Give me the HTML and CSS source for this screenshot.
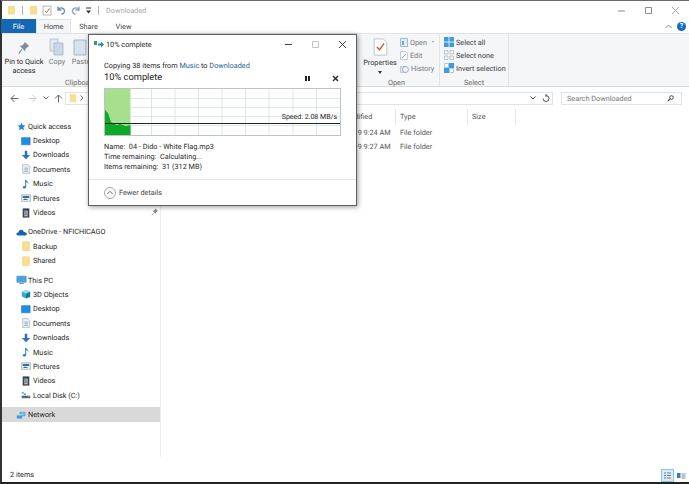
FILE: index.html
```html
<!DOCTYPE html>
<html lang="en">
<head>
<meta charset="utf-8">
<title>Downloaded</title>
<link rel="stylesheet" href="styles.css">
</head>
<body>
<svg class="defs" width="0" height="0">
  <symbol id="folder" viewBox="0 0 12 12"><path d="M2 1h8v10.500H2z" fill="#fbdf8e" stroke="#e8c66a" stroke-width=".6"/></symbol>
  <symbol id="desktop" viewBox="0 0 12 12"><path d="M.5 2h10.500v8.500H.5z" fill="#1c8fe8" stroke="#1668b8" stroke-width=".6"/></symbol>
  <symbol id="down" viewBox="0 0 12 12"><path d="M4.500 1h3v5H11L6 11 1 6h3.500z" fill="#2b72c4"/></symbol>
  <symbol id="docs" viewBox="0 0 12 12"><path d="M2 .5h6l2.500 2.500v8.500H2z" fill="#e6eef2" stroke="#96a8b2" stroke-width=".7"/><path d="M4 5h4.500M4 7h4.500M4 9h4.500" stroke="#6f9fb8" stroke-width=".8"/></symbol>
  <symbol id="music" viewBox="0 0 12 12"><path d="M5 1h1.200c.3 2 3.300 2.500 3 5-.4-1.200-1.400-2-3-2.200V9.500C6.200 11 4.800 11.500 3.800 11.500S2 10.800 2.200 9.800C2.500 8.700 4 8.300 5 8.700z" fill="#2a7fd0"/></symbol>
  <symbol id="pictures" viewBox="0 0 12 12"><path d="M.5 2h11v8H.5z" fill="#e9eff3" stroke="#8b9aa5" stroke-width=".7"/><path d="M2 3.500h8v2.500H2z" fill="#2f6fa8"/><path d="M2 8.500l3-2 4 2z" fill="#56606a"/></symbol>
  <symbol id="videos" viewBox="0 0 12 12"><path d="M2 .5h8v11H2z" fill="#3a4150"/><path d="M3.500 3h5v5h-5z" fill="#7f97b8"/><path d="M4 8h4v2H4z" fill="#d9c06b"/></symbol>
  <symbol id="pc" viewBox="0 0 14 12"><path d="M1 1h12v8H1z" fill="#43a3e8" stroke="#7e96a8" stroke-width=".8"/><path d="M4 10.500h6" stroke="#7e96a8" stroke-width="1.300"/></symbol>
  <symbol id="cube" viewBox="0 0 12 12"><path d="M6 .5l5 2.500-5 2.500L1 3z" fill="#8fe0ef"/><path d="M1 3l5 2.500v6L1 9z" fill="#39a9c9"/><path d="M11 3L6 5.500v6l5-2z" fill="#1779a8"/></symbol>
  <symbol id="disk" viewBox="0 0 14 12"><path d="M1 7h12v3.500H1z" fill="#56626c"/><path d="M1 2h3v2H1zM4 4h3v2H4z" fill="#2f9fe0"/><path d="M10 8.500h2" stroke="#8be08b"/></symbol>
  <symbol id="net" viewBox="0 0 14 12"><path d="M1 6.500h7v4H1z" fill="#3f9be0"/><path d="M5 5V2.500h6.500V7H8" fill="#7cc3ef" stroke="#4d8fc2" stroke-width=".8"/></symbol>
  <symbol id="cloud" viewBox="0 0 14 10"><path d="M3 9.500C1 9.500.3 8.200.6 7 1 5.800 2 5.500 3 5.500 3.500 3 5.800 1.500 8 2.500c1 .4 1.700 1.300 2 2.500 2-.2 3.700 1 3.700 2.500s-1 2-2.200 2z" fill="#1266b3"/></symbol>
  <symbol id="star" viewBox="0 0 12 12"><path d="M6 .5l1.600 3.700 3.900.3-3 2.600.9 3.900L6 9l-3.400 2 .9-3.900-3-2.600 3.900-.3z" fill="#2b7fd0"/></symbol>
</svg>

<div class="window">
  <header class="titlebar">
    <svg class="tb-ic" width="9" height="10"><use href="#folder"/></svg>
    <span class="tb-sep"></span>
    <svg class="tb-ic" width="9" height="10"><use href="#folder"/></svg>
    <svg class="tb-ic" width="10" height="11" viewBox="0 0 10 11"><path d="M1 1h8v9H1z" fill="#fff" stroke="#9aa4ad" stroke-width=".8"/><path d="M3 6l1.500 1.500L7.500 3.500" fill="none" stroke="#c8642a"/></svg>
    <svg class="tb-ic" width="10" height="10" viewBox="0 0 10 10"><path d="M2 1.500V5h3.500M2.300 4.500C4 2 8 2.500 8.500 5.500 8.800 7.500 7 9 5.500 9.300" fill="none" stroke="#6f8fa8" stroke-width="1.400"/></svg>
    <svg class="tb-ic tb-gap" width="10" height="10" viewBox="0 0 10 10"><path d="M8 1.500V5H4.500M7.700 4.500C6 2 2 2.500 1.500 5.500 1.200 7.500 3 9 4.500 9.300" fill="none" stroke="#8fa3b2" stroke-width="1.400"/></svg>
    <svg class="tb-ic" width="7" height="7" viewBox="0 0 7 7"><path d="M1 1h5" stroke="#333"/><path d="M1 3.500h5L3.500 6.500z" fill="#333"/></svg>
    <span class="tb-sep"></span>
    <span class="tb-title">Downloaded</span>
    <div class="win-btns">
      <svg width="9" height="9" viewBox="0 0 9 9"><path d="M1 5h7" stroke="#8a8a8a"/></svg>
      <svg width="9" height="9" viewBox="0 0 9 9"><path d="M1.500 1.500h6v6h-6z" fill="none" stroke="#8a8a8a"/></svg>
      <svg width="9" height="9" viewBox="0 0 9 9"><path d="M1 1l7 7M8 1L1 8" stroke="#8a8a8a" stroke-width=".8"/></svg>
    </div>
  </header>

  <nav class="tabs">
    <span class="tab tab-file">File</span>
    <span class="tab tab-active">Home</span>
    <span class="tab">Share</span>
    <span class="tab">View</span>
    <span class="tabs-right">
      <svg width="7" height="5" viewBox="0 0 7 5"><path d="M.5 4l3-3 3 3" fill="none" stroke="#8a8a8a"/></svg>
      <span class="help">?</span>
    </span>
  </nav>

  <section class="ribbon">
    <div class="group group-clip">
      <div class="group-body clip-body">
        <div class="big big-pin">
          <svg width="14" height="14" viewBox="0 0 14 16"><path d="M8 1l5 5-2 .8-2.500 2.700L8.500 12 2 5.500 4.500 5.500 7 3z" fill="#7f8b96"/><path d="M4.500 9.500L1 14.500" stroke="#7f8b96" stroke-width="1.300"/></svg>
          <span>Pin to Quick<br>access</span>
        </div>
        <div class="big big-copy">
          <svg width="16" height="18" viewBox="0 0 16 18"><path d="M1 1h8v12H1z" fill="#dfe8ef" stroke="#aab6c0" stroke-width=".7"/><path d="M5 5h9v12H5z" fill="#c9d7e6" stroke="#9db0c2" stroke-width=".7"/></svg>
          <span class="muted">Copy</span>
        </div>
        <div class="big big-paste">
          <svg width="16" height="18" viewBox="0 0 16 18"><path d="M1 2h12v15H1z" fill="#d6e2ee" stroke="#8fa2b4" stroke-width=".7"/></svg>
          <span class="muted">Paste</span>
        </div>
      </div>
      <div class="group-label clip-label">Clipboard</div>
    </div>
    <div class="group group-open">
      <div class="group-body open-body">
        <div class="big big-prop">
          <svg width="15" height="18" viewBox="0 0 16 20"><path d="M1 1h10l4 4v14H1z" fill="#fff" stroke="#a9b1b8" stroke-width=".8"/><path d="M4 10l3 3 5-7" fill="none" stroke="#c8582a" stroke-width="1.500"/></svg>
          <span>Properties</span>
          <i class="caret"></i>
        </div>
        <ul class="small-list">
          <li class="muted"><svg width="8" height="9" viewBox="0 0 8 9"><path d="M.5.500h7v8h-7z" fill="#e2ecf4" stroke="#7ba6c8" stroke-width=".7"/><path d="M3 3v4" stroke="#2b72b8" stroke-width="1.200"/></svg>Open <i class="mini-caret"></i></li>
          <li class="muted"><svg width="8" height="9" viewBox="0 0 8 9"><path d="M.5.500h5l2 2v6h-7z" fill="#fff" stroke="#a9bccb" stroke-width=".7"/><path d="M2 7l4-4" stroke="#8ab0cc"/></svg>Edit</li>
          <li class="muted"><svg width="9" height="9" viewBox="0 0 9 9"><path d="M.5 2.500h6v6h-6z" fill="#dbe6ee" stroke="#a2b4c2" stroke-width=".6"/><circle cx="5.500" cy="5.500" r="3" fill="#eef3f7" stroke="#7c93a6" stroke-width=".7"/></svg>History</li>
        </ul>
      </div>
      <div class="group-label">Open</div>
    </div>
    <div class="group group-select">
      <div class="group-body">
        <ul class="small-list select-list">
          <li><svg width="10" height="10" viewBox="0 0 10 10"><path d="M0 0h10v10H0z" fill="#3f9be0"/><path d="M5 0v10M0 5h10" stroke="#fff" stroke-width=".8"/></svg>Select all</li>
          <li><svg width="10" height="10" viewBox="0 0 10 10"><path d="M.5.500h3.500v3.500H.5zM6 .5h3.500v3.500H6zM.5 6h3.500v3.500H.5zM6 6h3.500v3.500H6z" fill="none" stroke="#a8b3bc" stroke-width=".7"/></svg>Select none</li>
          <li><svg width="10" height="10" viewBox="0 0 10 10"><path d="M0 5h5v5H0z" fill="#3f9be0"/><path d="M5 0h5v5H5z" fill="#3f9be0"/><path d="M.5.500h4v4h-4zM5.500 5.500h4v4h-4z" fill="none" stroke="#8bb5d6" stroke-width=".7"/></svg>Invert selection</li>
        </ul>
      </div>
      <div class="group-label">Select</div>
    </div>
  </section>

  <div class="addressbar">
    <div class="nav-btns">
      <svg width="9" height="9" viewBox="0 0 9 9"><path d="M8.500 4.500H1M4.500 1L1 4.500 4.500 8" fill="none" stroke="#5c6670"/></svg>
      <svg class="nav-fwd" width="9" height="9" viewBox="0 0 9 9"><path d="M.5 4.500H8M4.500 1L8 4.500 4.500 8" fill="none" stroke="#c8ccd0"/></svg>
      <svg class="nav-dd" width="6" height="4" viewBox="0 0 6 4"><path d="M.5.500L3 3 5.500.500" fill="none" stroke="#5c6670"/></svg>
      <svg class="nav-up" width="9" height="9" viewBox="0 0 9 9"><path d="M4.500 8.500V1M1 4.500L4.500 1 8 4.500" fill="none" stroke="#5c6670"/></svg>
    </div>
    <div class="crumbs">
      <svg width="8" height="10"><use href="#folder"/></svg>
      <svg class="crumb-chev" width="4" height="6" viewBox="0 0 4 6"><path d="M.5.500L3 3 .5 5.500" fill="none" stroke="#666"/></svg>
      <span class="crumb-fill"></span>
      <svg width="6" height="4" viewBox="0 0 6 4"><path d="M.5.500L3 3 5.500.500" fill="none" stroke="#444"/></svg>
      <svg class="crumb-refresh" width="8" height="9" viewBox="0 0 8 9"><path d="M4 1.500a3 3 0 1 1-3 3M4 0v3" fill="none" stroke="#555"/></svg>
    </div>
    <div class="search"><span>Search Downloaded</span>
      <svg width="7" height="7" viewBox="0 0 7 7"><circle cx="4.500" cy="2.500" r="1.800" fill="none" stroke="#444"/><path d="M3 4L.8 6.200" stroke="#444" stroke-width="1.100"/></svg>
    </div>
  </div>

  <div class="main">
    <aside class="sidebar">
      <div class="tree-group">
        <div class="row"><svg width="11" height="9"><use href="#star"/></svg>Quick access</div>
        <div class="row sub"><svg width="10" height="10"><use href="#desktop"/></svg>Desktop</div>
        <div class="row sub"><svg width="10" height="10"><use href="#down"/></svg>Downloads</div>
        <div class="row sub"><svg width="10" height="10"><use href="#docs"/></svg>Documents</div>
        <div class="row sub"><svg width="10" height="10"><use href="#music"/></svg>Music</div>
        <div class="row sub"><svg width="10" height="10"><use href="#pictures"/></svg>Pictures</div>
        <div class="row sub"><svg width="10" height="10"><use href="#videos"/></svg>Videos
          <svg class="pin" width="8" height="8" viewBox="0 0 14 16"><path d="M8 1l5 5-2 .8-2.500 2.700L8.500 12 2 5.500 4.500 5.500 7 3z" fill="#7f8b96"/><path d="M4.500 9.500L1 14.500" stroke="#7f8b96" stroke-width="1.500"/></svg>
        </div>
      </div>
      <div class="tree-group">
        <div class="row"><svg width="11" height="8"><use href="#cloud"/></svg>OneDrive - NFICHICAGO</div>
        <div class="row sub"><svg width="10" height="10"><use href="#folder"/></svg>Backup</div>
        <div class="row sub"><svg width="10" height="10"><use href="#folder"/></svg>Shared</div>
      </div>
      <div class="tree-group">
        <div class="row"><svg width="11" height="10"><use href="#pc"/></svg>This PC</div>
        <div class="row sub"><svg width="10" height="10"><use href="#cube"/></svg>3D Objects</div>
        <div class="row sub"><svg width="10" height="10"><use href="#desktop"/></svg>Desktop</div>
        <div class="row sub"><svg width="10" height="10"><use href="#docs"/></svg>Documents</div>
        <div class="row sub"><svg width="10" height="10"><use href="#down"/></svg>Downloads</div>
        <div class="row sub"><svg width="10" height="10"><use href="#music"/></svg>Music</div>
        <div class="row sub"><svg width="10" height="10"><use href="#pictures"/></svg>Pictures</div>
        <div class="row sub"><svg width="10" height="10"><use href="#videos"/></svg>Videos</div>
        <div class="row sub"><svg width="10" height="10"><use href="#disk"/></svg>Local Disk (C:)</div>
      </div>
      <div class="tree-group">
        <div class="row selected"><svg width="11" height="10"><use href="#net"/></svg>Network</div>
      </div>
    </aside>
    <section class="files">
      <div class="file-head">
        <span class="c-date">Date modified</span>
        <span class="c-type">Type</span>
        <span class="c-size">Size</span>
      </div>
      <div class="file-row"><span class="c-date">4/10/2019 9:24 AM</span><span class="c-type">File folder</span></div>
      <div class="file-row"><span class="c-date">4/10/2019 9:27 AM</span><span class="c-type">File folder</span></div>
    </section>
  </div>

  <footer class="status">
    <span>2 items</span>
    <div class="views">
      <span class="view view-on"><svg width="9" height="9" viewBox="0 0 9 9"><path d="M1 2h2M4 2h4M1 4.500h2M4 4.500h4M1 7h2M4 7h4" stroke="#6f7d88"/></svg></span>
      <span class="view"><svg width="9" height="8" viewBox="0 0 9 8"><path d="M0 1h3.500v5H0z" fill="#3a7cb8"/><path d="M4.500 2h4M4.500 4h4M4.500 6h4" stroke="#7b8893"/></svg></span>
    </div>
  </footer>
</div>

<div class="dialog">
  <div class="dlg-title">
    <svg width="10" height="8" viewBox="0 0 10 8"><path d="M0 1h3v4H0z" fill="#3ca04a"/><path d="M4 3.500h3V1.500L10 4.500 7 7.500V5.500H4z" fill="#2f7fc8"/></svg>
    <span>10% complete</span>
    <div class="dlg-btns">
      <svg width="9" height="9" viewBox="0 0 9 9"><path d="M1 4.500h7" stroke="#444"/></svg>
      <svg width="9" height="9" viewBox="0 0 9 9"><path d="M1.500 1.500h6v6h-6z" fill="none" stroke="#c4c4c4"/></svg>
      <svg width="9" height="9" viewBox="0 0 9 9"><path d="M1 1l7 7M8 1L1 8" stroke="#333" stroke-width=".9"/></svg>
    </div>
  </div>
  <div class="dlg-body">
    <p class="copying">Copying 38 items from <a>Music</a> to <a>Downloaded</a></p>
    <div class="dlg-head">
      <span class="percent">10% complete</span>
      <svg class="ctl-pause" width="7" height="7" viewBox="0 0 7 7"><path d="M1 1h2v5H1zM4 1h2v5H4z" fill="#222"/></svg>
      <svg class="ctl-stop" width="7" height="7" viewBox="0 0 7 7"><path d="M1 1l5 5M6 1L1 6" stroke="#222" stroke-width="1.300"/></svg>
    </div>
    <div class="chart">
      <svg width="237" height="48" viewBox="0 0 237 48">
        <rect x=".5" y=".5" width="236" height="47" fill="#fff" stroke="#bcc4c0"/>
        <path d="M47.500 1v46M71 1v46M94.500 1v46M118 1v46M141.500 1v46M165 1v46M189 1v46M212.500 1v46M1 10.500h235M1 19.500h235M1 28.500h235M1 37.500h235" stroke="#dce8e4"/>
        <rect x="1" y="1" width="25.500" height="46" fill="#a6e08f"/>
        <path d="M1 47V22l3 3 3 9 3 2 3 1 3-1 3 1 3 1 4.500-1V47z" fill="#0fa828"/>
        <path d="M1 35.500h235" stroke="#222"/>
      </svg>
      <span class="speed">Speed: 2.08 MB/s</span>
    </div>
    <div class="details">
      <div>Name:&nbsp; 04 - Dido - White Flag.mp3</div>
      <div>Time remaining:&nbsp; Calculating...</div>
      <div>Items remaining:&nbsp; 31 (312 MB)</div>
    </div>
  </div>
  <div class="dlg-foot">
    <svg width="12" height="12" viewBox="0 0 12 12"><circle cx="6" cy="6" r="5.500" fill="#fff" stroke="#a4a4a4"/><path d="M3.300 7L6 4.300 8.700 7" fill="none" stroke="#666"/></svg>
    <span>Fewer details</span>
  </div>
</div>
</body>
</html>
```

FILE: styles.css
```css
* { box-sizing: border-box; }
html, body { margin: 0; padding: 0; height: 484px; overflow: hidden; background: #fff; }
body { font-family: Roboto, "Open Sans", sans-serif; font-size: 7.300px; text-rendering: geometricPrecision; color: #1f1f1f; position: relative; }
ul { list-style: none; margin: 0; padding: 0; }
p { margin: 0; }
svg { display: block; flex: none; }
.defs { position: absolute; }

.window { height: 484px; display: flex; flex-direction: column; border-top: 1px solid #6c6c6c; border-left: 2px solid #333; border-bottom: 2px solid #222; background: #fff; }

.titlebar { height: 18px; display: flex; align-items: center; padding-left: 5px; gap: 4px; flex: none; }
.tb-sep { width: 1px; height: 9px; background: #b8b8b8; margin: 0 2px; }
.tb-gap { margin-left: 1px; }
.tb-title { color: #a4a8ac; margin-left: 1px; }
.win-btns { margin-left: auto; display: flex; gap: 18px; padding-right: 9px; }

.tabs { height: 14px; display: flex; align-items: stretch; flex: none; position: relative; }
.tab { width: 35px; display: flex; align-items: center; justify-content: center; color: #444; }
.tab-file { background: #1667b2; color: #fff; margin-left: -1px; margin-right: 0; width: 35px; }
.tab-active { background: #f5f6f7; border: 1px solid #e2e3e4; border-bottom: 0; }
.tabs-right { margin-left: auto; display: flex; align-items: center; gap: 5px; padding-right: 3px; }
.help { width: 9px; height: 9px; border-radius: 50%; background: #0f6cc0; color: #fff; font-size: 7px; font-weight: 700; line-height: 9px; text-align: center; }

.ribbon { height: 54px; flex: none; display: flex; background: #f5f6f7; border-top: 1px solid #e2e3e4; border-bottom: 1px solid #d9dadb; }
.group { display: flex; flex-direction: column; border-right: 1px solid #e2e3e4; }
.group-body { height: 43px; display: flex; flex: none; }
.group-label { text-align: center; color: #666; line-height: 10px; padding-top: .5px; }
.group-clip { width: 352px; }
.clip-body { padding: 3px 0 0 2px; gap: 0; }
.clip-label { text-align: left; padding-left: 63px; }
.big { display: flex; flex-direction: column; align-items: center; line-height: 8.500px; text-align: center; white-space: nowrap; }
.big svg { margin-bottom: 2px; }
.big-pin { width: 40px; }
.big-pin svg { margin-top: 4px; margin-bottom: 3px; }
.big-copy { width: 26px; margin-top: 1px; }
.big-paste { width: 22px; margin-top: 1px; }
.muted { color: #73777b; }
.group-open { width: 86px; }
.open-body { gap: 4px; padding: 4px 0 0 10px; }
.big-prop { width: 32px; color: #333; }
.big-prop svg { margin-bottom: 3px; }
.caret { display: block; width: 0; height: 0; margin-top: 3px; border: 2px solid transparent; border-top: 3px solid #333; border-bottom: 0; }
.small-list { display: flex; flex-direction: column; margin-top: -2.500px; }
.small-list li { display: flex; align-items: center; gap: 2px; height: 13.200px; white-space: nowrap; }
.mini-caret { width: 0; height: 0; margin-left: 3px; border: 1.500px solid transparent; border-top: 2px solid #999; border-bottom: 0; }
.group-select { width: 69px; }
.select-list { padding-left: 4px; margin-top: 1.500px; color: #3a3a3a; }

.addressbar { height: 22px; flex: none; display: flex; align-items: center; padding-left: 8px; padding-right: 6px; }
.nav-btns { display: flex; align-items: center; width: 55px; }
.nav-fwd { margin-left: 9px; }
.nav-dd { margin-left: 6px; }
.nav-up { margin-left: 5px; }
.crumbs { width: 488px; height: 13px; border: 1px solid #e2e3e4; display: flex; align-items: center; padding: 0 2px 0 3px; gap: 3px; }
.crumb-fill { flex: 1; }
.crumb-refresh { margin-left: 3px; }
.search { width: 121px; height: 13px; margin-left: 8px; border: 1px solid #e2e3e4; display: flex; align-items: center; justify-content: space-between; padding: 0 7px 0 5px; color: #777; }

.main { flex: 1; display: flex; min-height: 0; }
.sidebar { width: 159px; flex: none; border-right: 1px solid #eeeeee; padding-top: 10px; display: flex; flex-direction: column; gap: 5px; }
.row { height: 14.400px; display: flex; align-items: center; padding-left: 14px; gap: 1px; position: relative; white-space: nowrap; }
.row.sub { padding-left: 19px; gap: 2px; }
.row.selected { background: #d9d9d9; }
.pin { position: absolute; right: 1px; top: 3px; }

.files { flex: 1; }
.file-head, .file-row { display: flex; padding-left: 166px; color: #555; }
.file-head { height: 16px; align-items: center; }
.file-head span { border-right: 1px solid #e6e6e6; height: 16px; line-height: 16px; }
.file-row { height: 14.600px; align-items: center; }
.c-date { width: 69px; white-space: nowrap; }
.c-type { width: 72px; padding-left: 4px; }
.c-size { width: 48px; padding-left: 4px; }

.dialog { position: absolute; left: 88px; top: 34px; width: 269px; height: 172px; background: #fff; border: 1px solid #5f5f5f; box-shadow: 1px 1px 5px rgba(0,0,0,.4); display: flex; flex-direction: column; }
.dlg-title { height: 16px; margin-top: 1px; display: flex; align-items: center; padding-left: 5px; gap: 2px; flex: none; }
.dlg-btns { margin-left: auto; display: flex; gap: 18px; padding-right: 9px; }
.dlg-body { padding: 7px 15px 0 15px; flex: 1; }
.copying { line-height: 13px; }
.copying a { color: #2a5f94; }
.dlg-head { display: flex; align-items: center; height: 12px; }
.percent { font-size: 9.300px; color: #222; line-height: 12px; }
.ctl-pause { margin-left: auto; }
.ctl-stop { margin-left: 21px; margin-right: 2px; }
.chart { position: relative; width: 237px; height: 48px; margin-top: 4px; }
.speed { position: absolute; right: 4px; top: 24px; line-height: 10px; background: #fff; color: #222; font-size: 7px; }
.details { margin-top: 6px; line-height: 9.800px; }
.dlg-foot { height: 26px; flex: none; border-top: 1px solid #e4e4e4; display: flex; align-items: center; padding-left: 15px; gap: 3px; color: #444; }

.status { height: 25px; flex: none; display: flex; align-items: center; justify-content: space-between; padding-left: 8px; padding-top: 9px; }
.views { display: flex; gap: 1px; padding-right: 1px; align-self: flex-end; }
.view { width: 13px; height: 13px; display: flex; align-items: center; justify-content: center; border: 1px solid transparent; }
.view-on { background: #d8ecf8; border-color: #8cc4e6; }
```
